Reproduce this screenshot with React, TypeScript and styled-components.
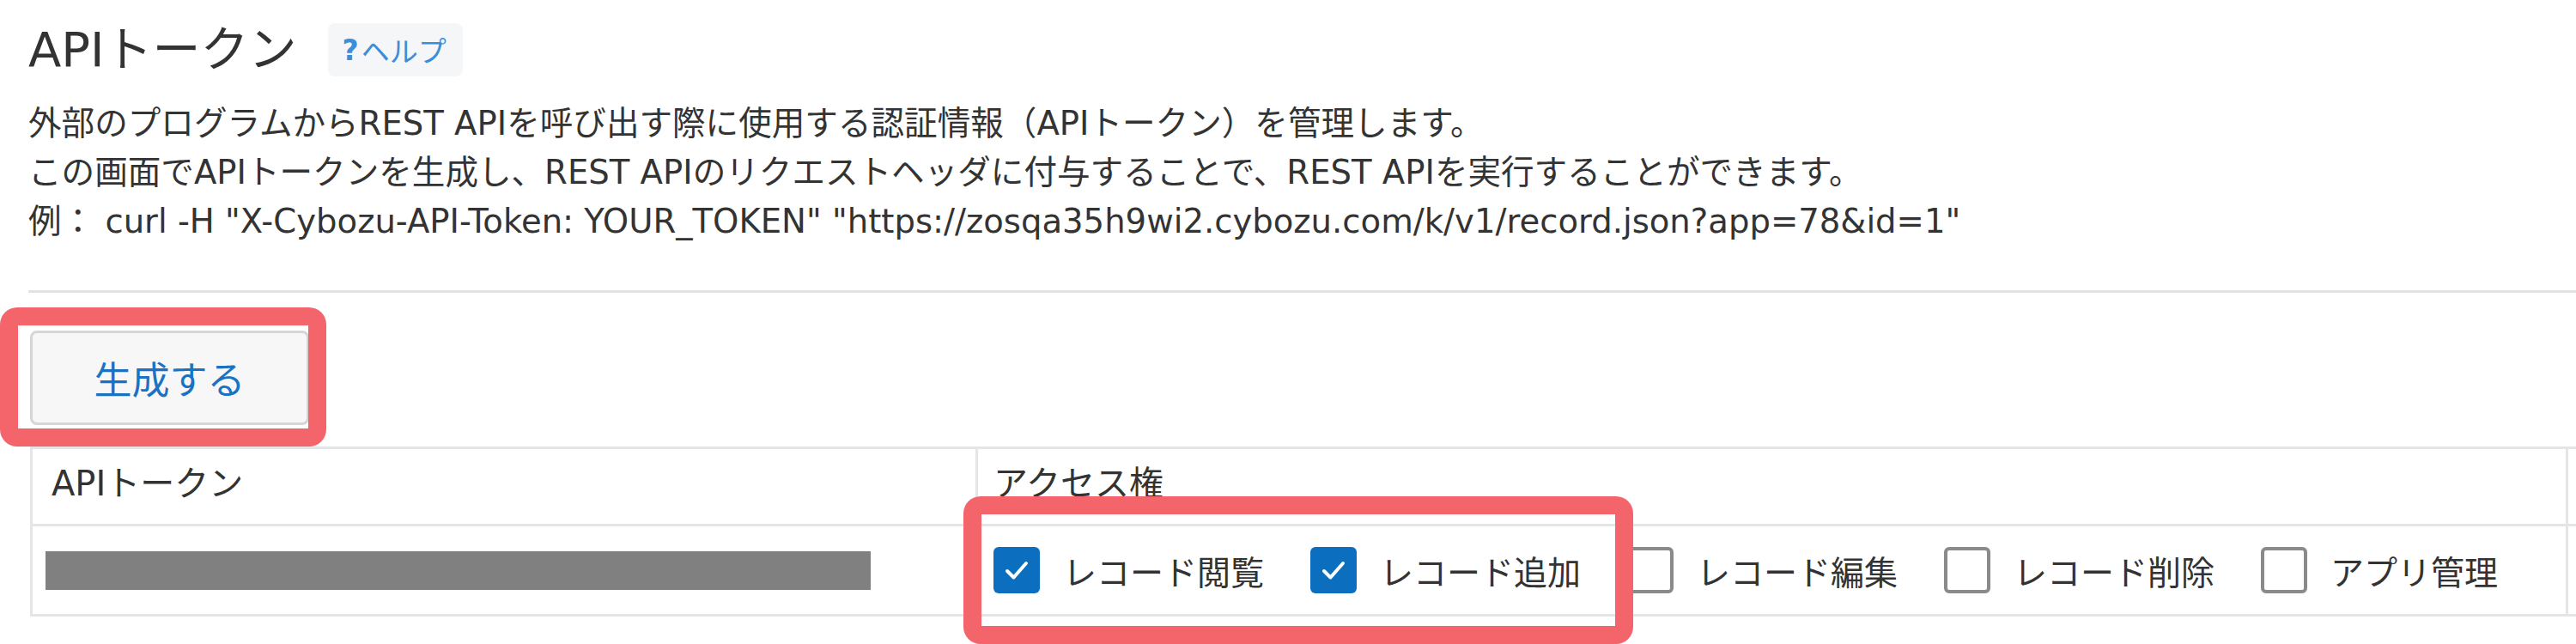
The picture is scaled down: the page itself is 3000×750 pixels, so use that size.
import * as React from 'react';
import styled, { createGlobalStyle } from 'styled-components';

const GlobalStyle = createGlobalStyle`
  body {
    margin: 0;
    background: #fff;
    overflow: hidden;
    font-family: "DejaVu Sans", "Noto Sans CJK JP", sans-serif;
    color: #333;
  }
`;

const Page = styled.div`
  position: relative;
  width: 3000px;
  height: 750px;
  box-sizing: border-box;
  padding: 27px 0 0 33px;
  overflow: hidden;
`;

const Header = styled.div`
  display: flex;
  align-items: center;
  gap: 36px;
  height: 62px;
`;

const Title = styled.h1`
  margin: 0;
  font-size: 56px;
  font-weight: normal;
  line-height: 62px;
  color: #333;
`;

const HelpBadge = styled.span`
  display: flex;
  align-items: center;
  height: 62px;
  padding: 0 19px 0 17px;
  border-radius: 8px;
  background: #f5f6f7;
  color: #3b8fd8;
  font-size: 33px;

  b {
    font-weight: bold;
    margin-right: 3px;
  }
`;

const Description = styled.div`
  margin-top: 26px;
  font-size: 38.6px;
  line-height: 57px;
  white-space: nowrap;
`;

const Separator = styled.hr`
  margin: 52px 0 0 0;
  border: 0;
  height: 3px;
  background: #e2e2e2;
`;

const GenerateButton = styled.button`
  display: block;
  margin: 44px 0 0 2px;
  width: 325px;
  height: 110px;
  border: 3px solid #d6d6d6;
  border-radius: 8px;
  background: #f7f7f7;
  color: #1a72c2;
  font-family: inherit;
  font-size: 44px;
`;

const TokenGrid = styled.div`
  display: grid;
  grid-template-columns: 1101px 1852px 200px;
  grid-template-rows: 90px 105px;
  margin: 25px 0 0 2px;
  border-top: 3px solid #e3e5e6;
  border-left: 3px solid #e3e5e6;
`;

const Cell = styled.div<{ $head?: boolean; $pad?: number }>`
  display: flex;
  align-items: center;
  box-sizing: border-box;
  padding: ${(p) => (p.$head ? '0 0 14px' : '0')} ${(p) => p.$pad ?? 20}px;
  border-right: 3px solid #e3e5e6;
  border-bottom: 3px solid #e3e5e6;
  font-size: ${(p) => (p.$head ? 40 : 39)}px;
  color: #333;
  white-space: nowrap;
`;

const MaskedToken = styled.div`
  width: 961px;
  height: 45px;
  background: #808080;
`;

const Permission = styled.label`
  display: flex;
  align-items: center;
  gap: 27px;
  margin-right: 54px;
`;

const Box = styled.span<{ $checked: boolean }>`
  display: grid;
  place-items: center;
  width: 54px;
  height: 54px;
  box-sizing: border-box;
  border-radius: 6px;
  background: ${(p) => (p.$checked ? '#0b6ebe' : '#fff')};
  border: ${(p) => (p.$checked ? 'none' : '4px solid #8a8a8a')};
`;

const Highlight = styled.div`
  position: absolute;
  box-sizing: border-box;
  border: 21px solid #f3646b;
  border-radius: 20px;
`;

const permissions = [
  { label: 'レコード閲覧', checked: true },
  { label: 'レコード追加', checked: true },
  { label: 'レコード編集', checked: false },
  { label: 'レコード削除', checked: false },
  { label: 'アプリ管理', checked: false },
];

const Check = () => (
  <svg width="54" height="54" viewBox="0 0 54 54">
    <path d="M16 28 L23.5 35.5 L38 19" fill="none" stroke="#fff" strokeWidth="4" strokeLinecap="round" strokeLinejoin="round" />
  </svg>
);

const App: React.FC = () => {
  return (
    <Page>
      <GlobalStyle />
      <Header>
        <Title>APIトークン</Title>
        <HelpBadge>
          <b>?</b>ヘルプ
        </HelpBadge>
      </Header>
      <Description>
        外部のプログラムからREST APIを呼び出す際に使用する認証情報（APIトークン）を管理します。
        <br />
        この画面でAPIトークンを生成し、REST APIのリクエストヘッダに付与することで、REST APIを実行することができます。
        <br />
        例： curl -H "X-Cybozu-API-Token: YOUR_TOKEN" "https://zosqa35h9wi2.cybozu.com/k/v1/record.json?app=78&amp;id=1"
      </Description>
      <Separator />
      <GenerateButton>生成する</GenerateButton>
      <TokenGrid>
        <Cell $head $pad={22}>APIトークン</Cell>
        <Cell $head $pad={18}>アクセス権</Cell>
        <Cell $head />
        <Cell $pad={15}>
          <MaskedToken />
        </Cell>
        <Cell $pad={18}>
          {permissions.map((perm) => (
            <Permission key={perm.label}>
              <Box $checked={perm.checked}>{perm.checked && <Check />}</Box>
              {perm.label}
            </Permission>
          ))}
        </Cell>
        <Cell />
      </TokenGrid>
      <Highlight style={{ left: 0, top: 358, width: 380, height: 162 }} />
      <Highlight style={{ left: 1122, top: 578, width: 780, height: 172 }} />
    </Page>
  );
};

export default App;
